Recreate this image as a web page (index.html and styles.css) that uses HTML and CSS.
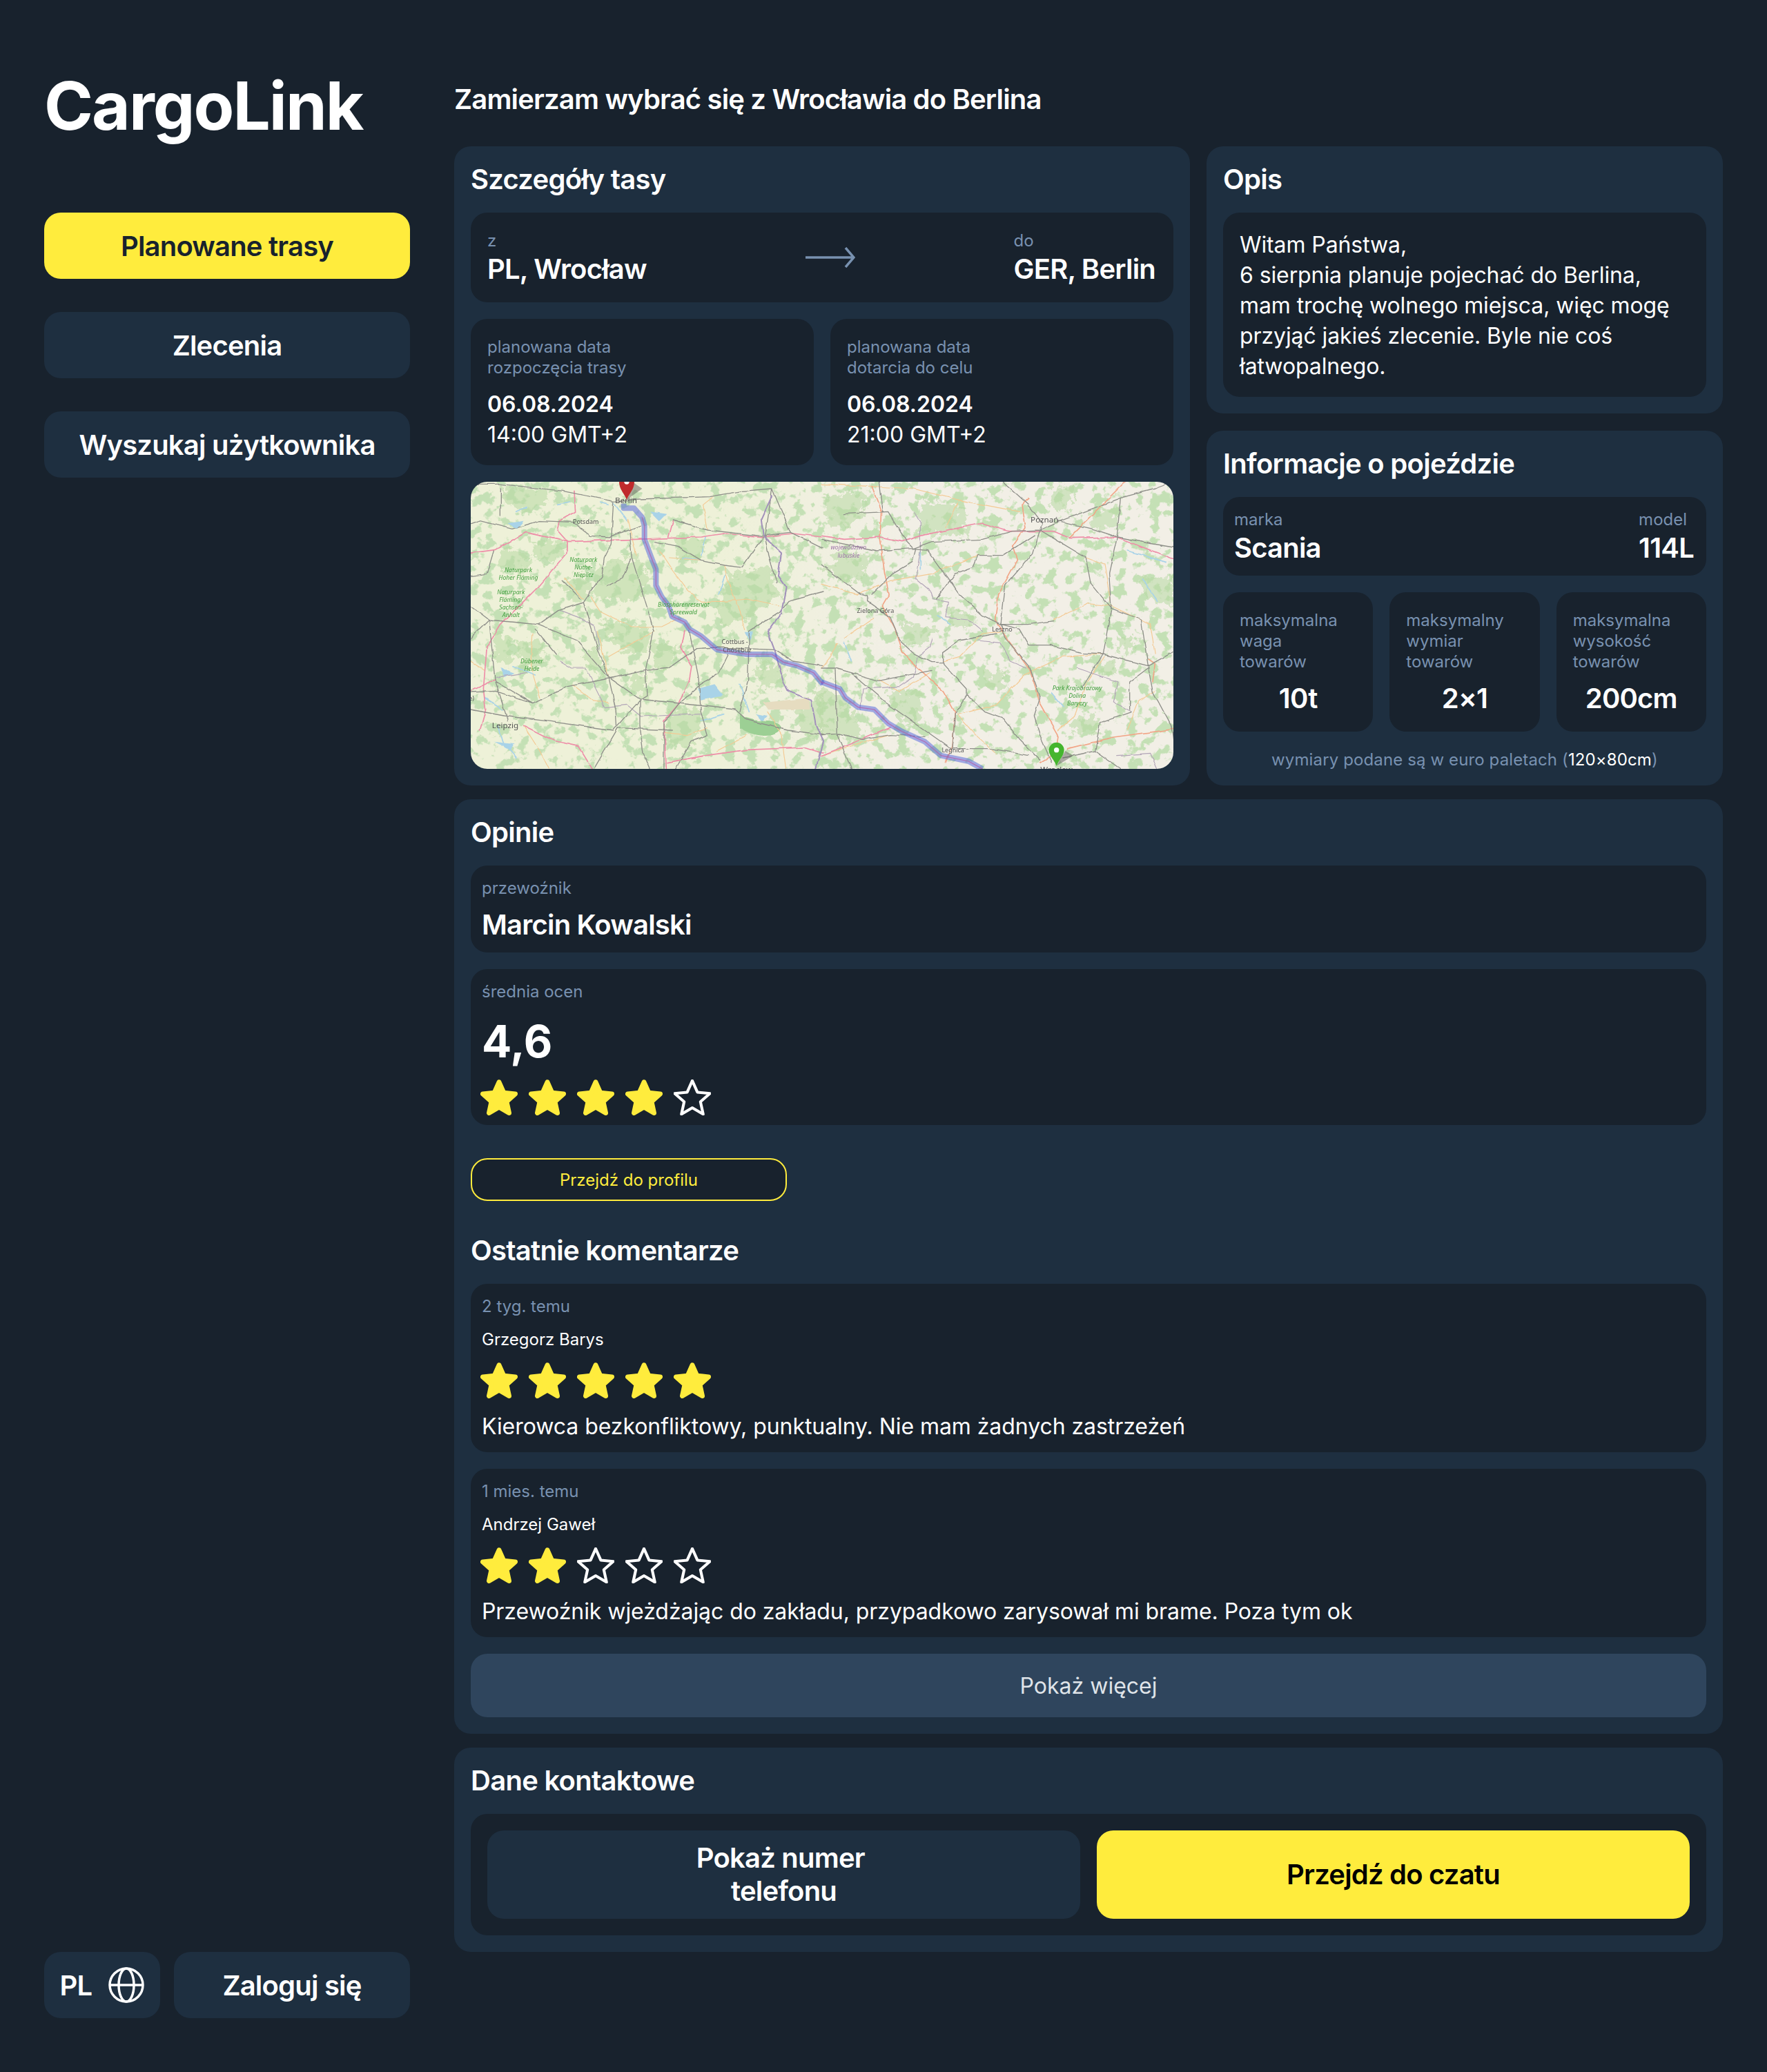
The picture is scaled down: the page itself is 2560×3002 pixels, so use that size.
FILE: index.html
```html
<!DOCTYPE html>
<html lang="pl">
<head>
<meta charset="utf-8">
<title>CargoLink</title>
<link rel="stylesheet" href="styles.css">
</head>
<body>
<svg class="sprite" width="0" height="0" aria-hidden="true">
  <defs>
    <polygon id="star" points="27,3.8 33.8,19.2 50.5,20.9 37.9,32 41.5,48.5 27,40 12.5,48.5 16.1,32 3.5,20.9 20.2,19.2"/>
    <linearGradient id="land" x1="0" y1="0" x2="1" y2="0">
      <stop offset=".35" stop-color="#eef1d8"/>
      <stop offset=".62" stop-color="#f2efe6"/>
    </linearGradient>
    <filter id="forest" x="0" y="0" width="100%" height="100%" color-interpolation-filters="sRGB">
      <feTurbulence type="fractalNoise" baseFrequency=".06" numOctaves="4" seed="11"/>
      <feColorMatrix type="matrix" values="0 0 0 0 .77  0 0 0 0 .88  0 0 0 0 .71  11 0 0 0 -5.9"/>
      <feGaussianBlur stdDeviation=".4"/>
    </filter>
    <filter id="wiggle" filterUnits="userSpaceOnUse" x="-60" y="-60" width="1660" height="1370">
      <feTurbulence type="fractalNoise" baseFrequency=".018" numOctaves="2" seed="5" result="n"/>
      <feDisplacementMap in="SourceGraphic" in2="n" scale="14" xChannelSelector="R" yChannelSelector="G"/>
    </filter>
    <filter id="organic" filterUnits="userSpaceOnUse" x="-60" y="-60" width="1660" height="1370">
      <feTurbulence type="fractalNoise" baseFrequency=".03" numOctaves="4" seed="9" result="n"/>
      <feDisplacementMap in="SourceGraphic" in2="n" scale="90" xChannelSelector="R" yChannelSelector="G"/>
    </filter>
  </defs>
</svg>
<div class="app">
  <aside class="sidebar">
    <div class="logo">CargoLink</div>
    <nav class="nav">
      <a class="nav-btn nav-btn-active">Planowane trasy</a>
      <a class="nav-btn">Zlecenia</a>
      <a class="nav-btn">Wyszukaj użytkownika</a>
    </nav>
    <div class="side-bottom">
      <div class="nav-btn lang">PL
        <svg class="globe" viewBox="0 0 52 52"><circle cx="26" cy="26" r="24"/><ellipse cx="26" cy="26" rx="11" ry="24"/><path d="M2 26H50"/></svg>
      </div>
      <div class="nav-btn login">Zaloguj się</div>
    </div>
  </aside>

  <main class="main">
    <h1 class="page-title">Zamierzam wybrać się z Wrocławia do Berlina</h1>
    <div class="top-grid">
      <section class="panel">
        <h2 class="panel-title">Szczegóły tasy</h2>
        <div class="box route-row">
          <div>
            <div class="label">z</div>
            <div class="value">PL, Wrocław</div>
          </div>
          <svg class="arrow" viewBox="0 0 72 30"><path d="M0 15H70M58 1L70 15L58 29"/></svg>
          <div>
            <div class="label">do</div>
            <div class="value">GER, Berlin</div>
          </div>
        </div>
        <div class="date-grid">
          <div class="box date-box">
            <div class="label">planowana data<br>rozpoczęcia trasy</div>
            <div class="date">06.08.2024</div>
            <div class="time">14:00 GMT+2</div>
          </div>
          <div class="box date-box">
            <div class="label">planowana data<br>dotarcia do celu</div>
            <div class="date">06.08.2024</div>
            <div class="time">21:00 GMT+2</div>
          </div>
        </div>
        <div class="map">
          <svg class="map-svg" viewBox="0 0 1018 416" width="1018" height="416">
            <rect class="map-base" width="1018" height="416"/>
            <rect class="map-noise" width="1018" height="416" filter="url(#forest)"/>
            <g transform="scale(.33333)">
              <g filter="url(#organic)">
              <path class="blob" d="M130 20L320 40L330 90L240 130L150 90ZM270 250L420 280L380 350L280 340ZM130 300L260 320L230 390L120 380ZM560 360L720 330L780 430L700 520L540 500ZM380 440L500 420L520 500L470 510ZM880 230L1010 260L1000 330L900 340ZM1130 400L1300 380L1330 500L1200 600L1090 620L1080 540ZM100 660L180 680L170 780L110 780ZM200 700L300 690L320 790L230 820ZM480 760L550 720L560 830L500 800ZM560 600L780 640L760 750L640 720ZM790 700L900 720L880 800L800 820ZM700 860L760 840L770 940L700 920ZM1240 810L1370 790L1350 880L1260 890ZM850 1000L1000 990L980 1150L860 1150ZM1420 960L1530 930L1530 1120L1440 1110Z"/>
              </g>
            </g>
            <g transform="translate(508) scale(.33333)">
              <g filter="url(#organic)">
              <path class="blob" d="M20 60L180 40L200 110L120 190L20 170ZM440 90L600 110L640 230L520 230L430 210ZM1000 30L1090 20L1100 80L1040 130L1000 100ZM90 300L200 330L190 420L90 430L10 370ZM-10 900L110 940L170 1100L60 1120L-10 1080ZM290 920L430 910L430 1050L340 1040ZM540 560L680 580L640 630L560 610ZM350 620L500 640L450 700L360 720ZM720 830L800 830L790 900L740 900ZM1290 690L1360 690L1360 730L1290 720ZM1380 420L1530 410L1530 540L1420 500ZM1090 1030L1200 1020L1200 1090L1100 1090ZM1230 790L1280 780L1280 840L1230 830ZM1170 130L1290 110L1280 190L1190 200Z"/>
              </g>
            </g>
            <g transform="scale(.33333)">
              <g filter="url(#wiggle)">
                <path class="lake" d="M160 180L230 170L200 205ZM985 900L1060 880L1100 930L1000 950ZM1240 1010L1290 1020L1270 1045ZM1190 650L1230 650L1210 690ZM780 130L850 140L820 170ZM130 810L190 830L150 850ZM100 1130L190 1140L170 1165Z"/>
                <path class="river" d="M1020 240L1005 320M1110 400L1080 490M920 330L1000 340M200 130L240 110M380 100L430 90M560 90L600 100M620 90L680 170M180 800L280 840M1170 880L1210 1000M1000 1040L1100 1010M60 940L140 990M120 1060L140 1130L200 1200"/>
                <path class="tree" d="M1170 1010C1230 1060 1340 1020 1350 1070C1330 1120 1230 1110 1170 1070Z"/>
                <path class="ground" d="M1270 960L1470 940L1475 990L1290 990Z"/>
                <path class="orange" d="M520 500L560 560L700 630L830 630L890 600M490 510L410 420M820 300L880 390L940 470L1000 520L1100 520L1200 510L1340 540M1010 100L1060 60M1010 100L1030 210M1100 360L1120 440L1170 560L1190 640M600 760L740 680L800 650M550 650L600 850M0 780L60 820M270 660L260 800L300 940M440 880L530 950L600 960M840 1090L940 1100L1030 1070M1290 1000L1350 1100L1370 1248M230 1060L300 1170L340 1248M680 160L700 240L720 320M860 330L1000 340M1070 1170L1200 1100"/>
                <path class="border-thin" d="M390 780L440 810L500 810L560 930L580 980L680 970L740 1020L1000 1010M390 560L470 590L540 630L560 730M110 850L240 830"/>
                <path class="pink" d="M0 310L110 295L240 220L420 260L720 250L1000 240L1100 225L1270 240L1400 225L1530 240M420 260L375 210L385 170L455 130L450 40M420 260L420 310L300 450L230 520L130 620L70 720L55 900L65 990L40 1080M930 650L915 720L960 800L950 860L900 970L840 1040L850 1248M0 910L105 860M230 1060L360 1125L470 1150L530 1248M855 1220L1020 1190L1200 1165L1450 1155L1530 1180M880 170L860 240"/>
                <path class="grey" d="M0 10H130L400 40L620 85L740 75L1040 65L1180 40L1310 30M0 185L40 170L180 205L300 170L440 175L520 235L600 240L740 190M880 165L1030 210L1260 235L1390 220L1530 290M690 220L700 330L770 560L795 650L760 820L765 930L735 950L735 1060L750 1180L780 1248M620 90L610 270L580 330L570 410L520 480L490 525L550 720L600 850L630 990L635 1065M0 540L80 600L290 620L460 690L600 850L735 945L880 960L1150 990L1200 1035L1380 1080L1530 1100M295 620L380 560L490 525M80 600L105 860L150 1000L160 1040M80 600L0 680M280 640L370 750M0 915L110 910L270 965L420 890L600 855L760 820L860 810L980 725L1070 720L1320 730L1400 780L1530 800M270 965L110 870M0 990L160 1020L330 1040L620 1080L735 950M640 1070L540 1240M640 1070L880 1080M1120 750L1080 830L1000 880L900 970L840 1050L840 1248M950 650L990 850L1000 1000L1030 1100L960 1130L890 1248M1310 30L1280 240L1290 300L1330 440M1390 220L1310 30M1270 240L1180 370L1100 360L1000 340L900 280L800 260M1530 480L1380 520L1350 560L1210 650L1205 860L1170 1000M590 455L660 420L695 335M400 430L480 510M130 150L130 30M100 300L70 400L0 410"/>
                <path class="purple" d="M1310 60L1265 160L1275 240L1350 310L1335 410L1370 460L1350 570L1290 650L1320 730L1360 870L1380 910L1480 950L1500 1060L1530 1130L1500 1248"/>
              </g>
              <path class="route" d="M665 95V115H710L745 155L755 190V250L785 330L805 380V450L830 500L860 540L875 585L930 610L950 640L1000 670L1070 730L1200 750H1310L1360 785L1420 800L1490 830L1530 880"/>
              <path class="route-core" d="M745 155L755 190V250L785 330L805 380V450L830 500L860 540L875 585L930 610L950 640L1000 670L1070 730L1200 750H1310L1360 785L1420 800L1490 830L1530 880"/>
              <text class="city city-big" x="675" y="92">Berlin</text>
              <text class="city" x="500" y="183">Potsdam</text>
              <text class="city city-big" x="150" y="1070">Leipzig</text>
              <text class="city" x="1148" y="705">Cottbus -</text>
              <text class="city" x="1158" y="741">Chósebuz</text>
              <text class="city" x="3" y="952">e)</text>
              <text class="park" x="490" y="347">Naturpark</text>
              <text class="park" x="490" y="381">Nuthe-</text>
              <text class="park" x="490" y="415">Nieplitz</text>
              <text class="park" x="207" y="393">Naturpark</text>
              <text class="park" x="207" y="427">Hoher Fläming</text>
              <text class="park" x="175" y="489">Naturpark</text>
              <text class="park" x="175" y="522">Fläming/</text>
              <text class="park" x="175" y="556">Sachsen-</text>
              <text class="park" x="175" y="589">Anhalt</text>
              <text class="park" x="265" y="788">Dübener</text>
              <text class="park" x="265" y="822">Heide</text>
              <text class="park" x="925" y="543">Biosphärenreservat</text>
              <text class="park" x="925" y="576">Spreewald</text>
            </g>
            <g transform="translate(508) scale(.33333)">
              <g filter="url(#wiggle)">
                <path class="river" d="M430 300V380M100 700L130 780M1330 300L1500 350M1400 420L1460 520M500 580L560 620M1000 920L1050 980"/>
                <path class="orange" d="M0 10L220 20L400 30L600 80L860 130M600 80L540 200M0 445L160 490L300 430L480 400L680 320M0 810L40 760L70 700M530 780L600 760L700 660L790 650M230 590L100 680M600 1010L760 970L880 840L1050 760L1225 750M1010 600L1160 530L1260 540L1430 620L1450 750M580 1000L670 1100L760 1180M1230 760L1150 880L1100 1020L1030 1080M1150 330L1230 360L1260 540M1450 910L1380 950L1330 1080M250 860L340 910L470 830M0 1190L120 1150L300 1100"/>
                <path class="border-thin" d="M400 130L430 180V300L410 420L480 480L490 510L550 520L540 590L640 600L700 650M480 680L470 720L420 760L400 850L340 890L180 900L170 990M680 690L780 700L820 780L890 810M1110 810L1290 870L1270 960L1350 1000M1280 1190L1430 1180L1460 1248"/>
                <path class="salmon" d="M220 20L260 130L255 240L275 400L295 490L265 540L320 640L350 740L410 800L530 910L580 1000L570 1150L540 1220M900 75L870 100L885 200L830 280L850 340L770 490L755 600L820 700L900 810L950 960L1030 1100L1020 1170M1075 245L1320 0M1420 770L1450 790L1440 870M1070 1160L1270 1110L1530 1075M1000 1190L950 1220"/>
                <path class="pink" d="M0 235L100 250L260 240L350 260L450 230L700 180L810 215L1010 215L1080 245L1280 240L1530 335M0 1190L150 1130L300 1065"/>
                <path class="grey" d="M790 0L900 100L960 180L950 210L1040 170L1300 70L1450 30L1530 0M1300 70L1285 240L1250 400L1260 550L1225 750L1130 900M950 210L1150 330L1170 440L1260 550L1390 600L1420 800L1440 910L1520 1060L1530 1130M1030 170L1180 205L1285 240L1440 270L1530 285M950 210L920 310L800 450L780 620M950 210L830 215L700 250L480 260L400 290L240 300L0 250M400 290L460 295L600 490L700 580L780 620L860 640L900 710L1000 710L1130 745L1225 750L1420 800L1530 740M780 620L800 680L900 800L950 940L925 1020L960 1130L1000 1220M760 660L600 690L530 740V790L630 900V925L710 1000L790 1030L860 1120L950 1210M0 810H60L130 830L280 960L450 1080L570 1165M530 785H480L400 745L340 690L300 590L200 520V495L170 490L0 360M130 830L250 865L480 820M60 815L70 1100L130 1248M0 1100L80 1095L180 1120L300 1100L450 1108M570 1160H740L900 1190M630 925L580 1010L570 1160M1050 1200L1190 1170L1300 1248M1190 1170L1210 1050L1350 1000M1420 810L1340 870V990M100 140L290 130L370 260L400 290M250 0L265 130M410 290L395 350L310 400L220 490M680 320H790L930 230M680 320L660 370L580 400L500 510M780 620L900 620L1010 605"/>
              </g>
              <path class="route" d="M0 870L80 900L105 940L160 980L230 990L290 1050L350 1085L450 1130L520 1190L640 1215L700 1248"/>
              <path class="route-core" d="M0 870L80 900L105 940L160 980L230 990L290 1050L350 1085L450 1130L520 1190L640 1215L700 1248"/>
              <text class="city city-big" x="970" y="178">Poznań</text>
              <text class="city" x="235" y="571">Zielona Góra</text>
              <text class="city" x="786" y="650">Leszno</text>
              <text class="city" x="572" y="1176">Legnica</text>
              <text class="city city-big" x="1022" y="1262">Wrocław</text>
              <text class="park" x="1112" y="906">Park Krajobrazowy</text>
              <text class="park" x="1112" y="939">Dolina</text>
              <text class="park" x="1112" y="973">Baryczy</text>
              <text class="region" x="118" y="293">województwo</text>
              <text class="region" x="118" y="330">lubuskie</text>
              <path class="pin-shadow" d="M1022 1235L1095 1190L1060 1170Z"/>
              <path class="pin-green" d="M1022 1235C1010 1205 989 1190 989 1166A33 33 0 0 1 1055 1166C1055 1190 1034 1205 1022 1235Z"/>
              <circle class="pin-dot" cx="1022" cy="1166" r="11"/>
            </g>
            <g transform="scale(.33333)">
              <path class="pin-shadow" d="M678 78L745 30L710 5Z"/>
              <path class="pin-red" d="M678 78C666 48 645 33 645 0A33 33 0 0 1 711 0C711 33 690 48 678 78Z"/>
              <circle class="pin-dot" cx="678" cy="0" r="11"/>
            </g>
          </svg>
        </div>
      </section>

      <div class="side-col">
        <section class="panel">
          <h2 class="panel-title">Opis</h2>
          <div class="box desc">Witam Państwa,<br>6 sierpnia planuje pojechać do Berlina,<br>mam trochę wolnego miejsca, więc mogę<br>przyjąć jakieś zlecenie. Byle nie coś<br>łatwopalnego.</div>
        </section>
        <section class="panel panel-grow">
          <h2 class="panel-title">Informacje o pojeździe</h2>
          <div class="box brand-row">
            <div>
              <div class="label">marka</div>
              <div class="value">Scania</div>
            </div>
            <div>
              <div class="label">model</div>
              <div class="value">114L</div>
            </div>
          </div>
          <div class="spec-grid">
            <div class="box spec">
              <div class="label">maksymalna<br>waga<br>towarów</div>
              <div class="value spec-value">10t</div>
            </div>
            <div class="box spec">
              <div class="label">maksymalny<br>wymiar<br>towarów</div>
              <div class="value spec-value">2×1</div>
            </div>
            <div class="box spec">
              <div class="label">maksymalna<br>wysokość<br>towarów</div>
              <div class="value spec-value">200cm</div>
            </div>
          </div>
          <p class="footnote">wymiary podane są w euro paletach (<span class="footnote-em">120×80cm</span>)</p>
        </section>
      </div>
    </div>

    <section class="panel">
      <h2 class="panel-title">Opinie</h2>
      <div class="box carrier">
        <div class="label">przewoźnik</div>
        <div class="value carrier-name">Marcin Kowalski</div>
      </div>
      <div class="box rating">
        <div class="label">średnia ocen</div>
        <div class="rating-num">4,6</div>
        <div class="stars">
          <svg class="star" viewBox="0 0 54 52"><use href="#star"/></svg>
          <svg class="star" viewBox="0 0 54 52"><use href="#star"/></svg>
          <svg class="star" viewBox="0 0 54 52"><use href="#star"/></svg>
          <svg class="star" viewBox="0 0 54 52"><use href="#star"/></svg>
          <svg class="star star-off" viewBox="0 0 54 52"><use href="#star"/></svg>
        </div>
      </div>
      <a class="profile-btn">Przejdź do profilu</a>
      <h2 class="panel-title sub-title">Ostatnie komentarze</h2>
      <div class="box comment">
        <div class="label">2 tyg. temu</div>
        <div class="author">Grzegorz Barys</div>
        <div class="stars">
          <svg class="star" viewBox="0 0 54 52"><use href="#star"/></svg>
          <svg class="star" viewBox="0 0 54 52"><use href="#star"/></svg>
          <svg class="star" viewBox="0 0 54 52"><use href="#star"/></svg>
          <svg class="star" viewBox="0 0 54 52"><use href="#star"/></svg>
          <svg class="star" viewBox="0 0 54 52"><use href="#star"/></svg>
        </div>
        <div class="comment-text">Kierowca bezkonfliktowy, punktualny. Nie mam żadnych zastrzeżeń</div>
      </div>
      <div class="box comment">
        <div class="label">1 mies. temu</div>
        <div class="author">Andrzej Gaweł</div>
        <div class="stars">
          <svg class="star" viewBox="0 0 54 52"><use href="#star"/></svg>
          <svg class="star" viewBox="0 0 54 52"><use href="#star"/></svg>
          <svg class="star star-off" viewBox="0 0 54 52"><use href="#star"/></svg>
          <svg class="star star-off" viewBox="0 0 54 52"><use href="#star"/></svg>
          <svg class="star star-off" viewBox="0 0 54 52"><use href="#star"/></svg>
        </div>
        <div class="comment-text">Przewoźnik wjeżdżając do zakładu, przypadkowo zarysował mi brame. Poza tym ok</div>
      </div>
      <a class="more-btn">Pokaż więcej</a>
    </section>

    <section class="panel">
      <h2 class="panel-title">Dane kontaktowe</h2>
      <div class="box contact">
        <a class="contact-btn">Pokaż numer&nbsp;<br>telefonu</a>
        <a class="contact-btn contact-btn-primary">Przejdź do czatu</a>
      </div>
    </section>
  </main>
</div>
</body>
</html>
```

FILE: styles.css
```css
* { box-sizing: border-box; }
html, body { margin: 0; padding: 0; }
body {
  background: #18222d;
  color: #fff;
  font-family: "Inter", "Liberation Sans", sans-serif;
}
.sprite { position: absolute; }
.app {
  display: grid;
  grid-template-columns: 530px 1fr;
  column-gap: 64px;
  padding: 0 64px;
  height: 3002px;
}
.sidebar { display: flex; flex-direction: column; padding-bottom: 78px; }
.logo {
  margin-top: 95px;
  height: 116px;
  font-size: 96px;
  line-height: 116px;
  font-weight: 700;
  letter-spacing: -.02em;
}
.nav { margin-top: 97px; display: flex; flex-direction: column; gap: 48px; }
.nav-btn {
  display: flex;
  align-items: center;
  justify-content: center;
  height: 96px;
  border-radius: 24px;
  background: #1e2f40;
  color: #fff;
  font-size: 40px;
  font-weight: 600;
  letter-spacing: -.02em;
}
.nav-btn-active { background: #ffec3d; color: #18222d; }
.side-bottom { margin-top: auto; display: flex; gap: 20px; }
.lang { width: 168px; gap: 24px; }
.login { flex: 1; }
.globe { width: 52px; height: 52px; fill: none; stroke: #fff; stroke-width: 3.5; }

.main { display: flex; flex-direction: column; gap: 20px; padding-top: 120px; }
.page-title { margin: 0 0 24px; font-size: 40px; line-height: 48px; font-weight: 600; letter-spacing: -.021em; white-space: nowrap; }
.top-grid { display: grid; grid-template-columns: 1fr 748px; column-gap: 24px; }
.side-col { display: flex; flex-direction: column; gap: 25px; }
.panel {
  display: flex;
  flex-direction: column;
  gap: 24px;
  padding: 24px;
  background: #1e2f40;
  border-radius: 24px;
}
.panel-grow { flex: 1; }
.panel-title { margin: 0; font-size: 40px; line-height: 48px; font-weight: 600; letter-spacing: -.018em; }
.box { background: #18222d; border-radius: 24px; }
.label { padding-top: 2px; margin-bottom: -2px; font-size: 24px; line-height: 30px; color: #7891b0; }
.value { font-size: 40px; line-height: 48px; font-weight: 600; letter-spacing: -.02em; white-space: nowrap; }

.route-row {
  display: flex;
  align-items: center;
  justify-content: space-between;
  padding: 24px 26px 24px 24px;
}
.arrow { width: 72px; height: 30px; fill: none; stroke: #7891b0; stroke-width: 3.5; }
.label + .value { margin-top: 4px; }
.date-grid { display: grid; grid-template-columns: 1fr 1fr; gap: 24px; }
.date-box { padding: 24px 24px 22px; }
.date { margin-top: 18px; font-size: 32px; line-height: 44px; font-weight: 600; }
.time { font-size: 32px; line-height: 44px; }
.map { height: 416px; border-radius: 24px; overflow: hidden; }
.map-svg { display: block; filter: blur(.5px); }
.map-base { fill: url(#land); }
.map-svg path { fill: none; stroke-linejoin: round; stroke-linecap: round; }
.map-svg .blob { fill: #b7d9a3; stroke: #b7d9a3; stroke-width: 6; opacity: .55; }
.map-svg .lake { fill: #a9d3e8; }
.map-svg .river { stroke: #a9d3e8; stroke-width: 5; }
.map-svg .tree { fill: #9ccf94; }
.map-svg .ground { fill: #e6dcc0; }
.map-svg .orange { stroke: #f4ca94; stroke-width: 3.5; }
.map-svg .border-thin { stroke: #b3a6b8; stroke-width: 3.5; }
.map-svg .pink { stroke: #ee8ea8; stroke-width: 5; }
.map-svg .salmon { stroke: #f2a587; stroke-width: 5; }
.map-svg .grey { stroke: #8f908a; stroke-width: 4; }
.map-svg .purple { stroke: #a290bb; stroke-width: 6; }
.map-svg .route { stroke: #4d60de; stroke-width: 24; opacity: .5; stroke-linecap: butt; }
.map-svg .route-core { stroke: #b75aa8; stroke-width: 3.5; opacity: .8; }
.map-svg .pin-shadow { fill: #55544f; opacity: .45; }
.map-svg .pin-red { fill: #c02a2c; }
.map-svg .pin-green { fill: #45b52e; }
.pin-dot { fill: #fff; }
.city, .park, .region { text-anchor: middle; font-family: "Noto Sans", "Liberation Sans", sans-serif; }
.city { font-size: 27px; fill: #555; }
.city-big { font-size: 35px; }
.park { font-size: 26px; font-style: italic; fill: #3f9e3c; }
.region { font-size: 26px; font-style: italic; fill: #9e74a9; }

.desc { padding: 25px 24px 0; font-size: 32px; line-height: 44px; letter-spacing: -.003em; height: 267px; }
.brand-row { display: flex; justify-content: space-between; padding: 16px 18px 16px 16px; }
.spec-grid { display: grid; grid-template-columns: repeat(3, 1fr); gap: 24px; }
.spec { padding: 24px; }
.label + .spec-value { margin-top: 16px; text-align: center; }
.footnote { margin: 0; padding-top: 2px; margin-bottom: -2px; font-size: 24px; line-height: 30px; letter-spacing: .005em; text-align: center; color: #7891b0; }
.footnote-em { color: #fff; }

.carrier { padding: 16px; }
.label + .carrier-name { margin-top: 16px; }
.rating { padding: 16px 16px 14px; }
.rating-num { margin-top: 20px; font-size: 64px; line-height: 78px; font-weight: 700; }
.stars { display: flex; gap: 16px; margin-left: -2px; }
.rating .stars { margin-top: 16px; }
.star { width: 54px; height: 52px; }
.star use { fill: #ffec3d; stroke: #ffec3d; stroke-width: 7; stroke-linejoin: round; }
.star-off use {
  fill: none;
  stroke: #fff;
  stroke-width: 3.8;
  transform: translate(-2.3px, -2.4px) scale(1.085);
}
.profile-btn {
  display: flex;
  align-items: center;
  justify-content: center;
  width: 458px;
  height: 62px;
  margin-top: 24px;
  background: #18222d;
  border: 2px solid #ffec3d;
  border-radius: 24px;
  color: #ffec3d;
  font-size: 24px;
}
.sub-title { margin-top: 24px; }
.comment { padding: 16px; }
.author { margin-top: 20px; font-size: 24px; line-height: 30px; }
.comment .stars { margin-top: 18px; }
.comment-text { margin-top: 21px; padding-bottom: 1px; font-size: 32px; line-height: 40px; letter-spacing: -.002em; }
.more-btn {
  display: flex;
  align-items: center;
  justify-content: center;
  height: 92px;
  border-radius: 24px;
  background: #2f455d;
  color: #dfe3e8;
  font-size: 32px;
}
.contact { display: grid; grid-template-columns: 1fr 1fr; gap: 24px; padding: 24px; }
.contact-btn {
  display: flex;
  align-items: center;
  justify-content: center;
  height: 128px;
  border-radius: 24px;
  background: #1e2f40;
  color: #fff;
  font-size: 40px;
  line-height: 48px;
  font-weight: 600;
  letter-spacing: -.02em;
  text-align: center;
}
.contact-btn-primary { background: #ffec3d; color: #000; }
```
